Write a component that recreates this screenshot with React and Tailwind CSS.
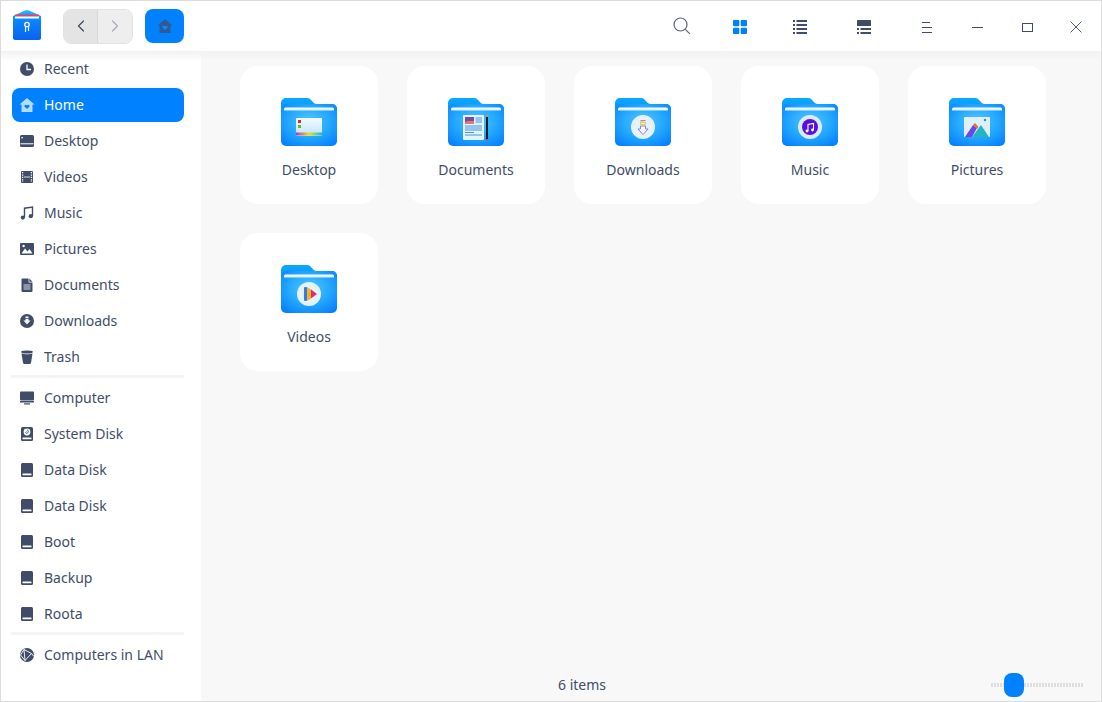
import { ChevronLeft, ChevronRight } from "lucide-react";

const ink = "#414d68";

// sidebar glyphs, all drawn on a 16x16 box
const ClockIcon = ({ color = ink }) => (
  <svg width="16" height="16" viewBox="0 0 16 16">
    <circle cx="8" cy="8" r="7" fill={color} />
    <path d="M8 3.5V8.5H12" fill="none" stroke="#fff" strokeWidth="1.3" />
  </svg>
);

const HomeIcon = ({ color = ink, heart = "#fff" }) => (
  <svg width="16" height="16" viewBox="0 0 16 16">
    <path d="M8 1L15.5 7.6H13.5V15H2.5V7.6H.5Z" fill={color} />
    <path d="M8 12L5.4 9.4C5 8.2 6.8 7.2 8 8.4 9.2 7.2 11 8.2 10.6 9.4Z" fill={heart} />
  </svg>
);

const DesktopIcon = () => (
  <svg width="16" height="16" viewBox="0 0 16 16">
    <rect x="1" y="2" width="14" height="12" rx="1.5" fill={ink} />
    <path d="M1.5 10.8H14.5" stroke="#fff" strokeWidth="1" />
    <rect x="2.4" y="4" width="1.4" height="1.4" fill="#fff" />
  </svg>
);

const VideoIcon = () => (
  <svg width="16" height="16" viewBox="0 0 16 16">
    <rect x="2" y="2" width="12" height="12" rx="1" fill={ink} />
    <path d="M3.6 3V13M12.4 3V13" stroke="#fff" strokeWidth="1.3" strokeDasharray="1.3 1.1" />
    <path d="M5 8H11" stroke="#fff" strokeWidth=".8" />
  </svg>
);

const MusicIcon = () => (
  <svg width="16" height="16" viewBox="0 0 16 16">
    <path d="M5.5 12.5V3.2L13.5 2V11" fill="none" stroke={ink} strokeWidth="1.4" />
    <circle cx="3.8" cy="12.6" r="2.1" fill={ink} />
    <circle cx="11.8" cy="11.2" r="2.1" fill={ink} />
  </svg>
);

const PictureIcon = () => (
  <svg width="16" height="16" viewBox="0 0 16 16">
    <rect x="1" y="2" width="14" height="12" rx="1" fill={ink} />
    <path d="M2.5 12.5L6 7.5 8.5 10.5 10.5 8 13.5 12.5Z" fill="#fff" />
    <circle cx="4.6" cy="5" r="1.2" fill="#fff" />
  </svg>
);

const DocIcon = () => (
  <svg width="16" height="16" viewBox="0 0 16 16">
    <path d="M2.5 2.5A1 1 0 0 1 3.5 1.5H9.6V5.4H13.5V14A1 1 0 0 1 12.5 15H3.5A1 1 0 0 1 2.5 14Z" fill={ink} />
    <path d="M10.3 1.5L13.5 4.7H10.3Z" fill={ink} />
    <path d="M4.5 8H11.5M4.5 10H11.5M4.5 12H11.5" stroke="#fff" strokeWidth=".8" />
  </svg>
);

const DownloadIcon = () => (
  <svg width="16" height="16" viewBox="0 0 16 16">
    <circle cx="8" cy="8" r="7" fill={ink} />
    <path d="M6.5 3.5H9.5V5H6.5ZM6.5 5.8H9.5V7.5H11.5L8 11.5 4.5 7.5H6.5Z" fill="#fff" />
  </svg>
);

const TrashIcon = () => (
  <svg width="16" height="16" viewBox="0 0 16 16">
    <ellipse cx="8" cy="3" rx="6" ry="1.6" fill={ink} />
    <path d="M2.5 4.5C5 5.5 11 5.5 13.5 4.5L12 14A1.5 1.5 0 0 1 10.5 15H5.5A1.5 1.5 0 0 1 4 14Z" fill={ink} />
  </svg>
);

const ComputerIcon = () => (
  <svg width="16" height="16" viewBox="0 0 16 16">
    <rect x="1" y="1.5" width="14" height="9" rx="1" fill={ink} />
    <rect x="1" y="11" width="14" height="1.5" fill={ink} />
    <rect x="5" y="13.3" width="6" height="1.2" fill={ink} />
  </svg>
);

const DiskIcon = ({ logo }) => (
  <svg width="16" height="16" viewBox="0 0 16 16">
    <rect x="2" y="1" width="12" height="14" rx="1.5" fill={ink} />
    <rect x="3.5" y="11.5" width="9" height="1.8" rx=".4" fill="#fff" />
    {logo && <circle cx="8" cy="6" r="3.4" fill="#fff" />}
    {logo && <path d="M8 3.5C10 5 9.5 7 7.5 7.5 6.5 7 6.5 6 7.5 5.5" fill="none" stroke={ink} strokeWidth=".9" />}
  </svg>
);

const SystemDiskIcon = () => <DiskIcon logo />;

const NetworkIcon = () => (
  <svg width="16" height="16" viewBox="0 0 16 16">
    <circle cx="8" cy="8" r="7" fill={ink} />
    <path d="M5 2.5L12.5 6.5 6 13.5ZM1.5 8L5 2.5M1.5 8L6 13.5M12.5 6.5L14.5 9" fill="none" stroke="#fff" strokeWidth=".9" />
  </svg>
);

// the coloured folder shell, the art in the middle is passed in as children
const Folder = ({ id, children }) => (
  <svg width="56" height="48" viewBox="0 0 56 48">
    <defs>
      <linearGradient id={`tab-${id}`} x1="0" y1="0" x2="0" y2="1">
        <stop offset="0" stopColor="#0aa8ff" />
        <stop offset="1" stopColor="#0a8cff" />
      </linearGradient>
      <radialGradient id={`body-${id}`} cx=".5" cy=".42" r=".7">
        <stop offset="0" stopColor="#55c8ff" />
        <stop offset=".55" stopColor="#22a6ff" />
        <stop offset="1" stopColor="#0580ff" />
      </radialGradient>
      <linearGradient id={`strip-${id}`} x1="0" y1="0" x2="0" y2="1">
        <stop offset="0" stopColor="#ffffff" />
        <stop offset="1" stopColor="#cfeeff" />
      </linearGradient>
    </defs>
    <path d="M0 5A5 5 0 0 1 5 0H26C29 0 29.5 1.5 31 3 32 4.5 33 6 36 6H51A5 5 0 0 1 56 11V20H0Z" fill={`url(#tab-${id})`} />
    <rect x="0" y="6" width="56" height="42" rx="5" fill={`url(#body-${id})`} />
    <path d="M3 12.5V11A1.5 1.5 0 0 1 4.5 9.5H51.5A1.5 1.5 0 0 1 53 11V12.5Z" fill={`url(#strip-${id})`} />
    {children}
  </svg>
);

const DesktopArt = () => (
  <g>
    <defs>
      <linearGradient id="paper" x1="0" y1="0" x2="0" y2="1">
        <stop offset="0" stopColor="#f4fbff" />
        <stop offset="1" stopColor="#bfe2fb" />
      </linearGradient>
      <linearGradient id="rainbow">
        <stop offset="0" stopColor="#a23ad8" />
        <stop offset=".5" stopColor="#e8e21a" />
        <stop offset="1" stopColor="#1fb5d6" />
      </linearGradient>
    </defs>
    <rect x="15" y="20" width="26" height="18" rx="1" fill="url(#paper)" />
    <rect x="17" y="22" width="3" height="3" fill="#e0263f" />
    <rect x="17" y="27" width="3" height="3" fill="#6eb52c" />
    <rect x="15" y="34.5" width="26" height="3" fill="url(#rainbow)" />
  </g>
);

const DocumentsArt = () => (
  <g>
    <rect x="15" y="17" width="21" height="25" rx="1" fill="#e6f3fd" />
    <rect x="17" y="19" width="9" height="7" fill="#7a4aa8" />
    <path d="M20 23H26V26H17V24Z" fill="#e07a60" />
    <path d="M27.5 20H34M27.5 22H34M27.5 24H34M17 28H34M17 30H34M17 32H34M17 34.5H26M17 37H34" stroke="#2a8ee0" strokeWidth=".9" />
    <rect x="38" y="17" width="2" height="25" fill="#1c1c22" />
    <rect x="38" y="17" width="2" height="2" fill="#b89a5a" />
    <rect x="38" y="41" width="2" height="1.5" fill="#d84060" />
  </g>
);

const DownloadsArt = () => (
  <g>
    <circle cx="28" cy="29" r="12" fill="#e4f2fd" />
    <rect x="25.5" y="22" width="5" height="1.2" fill="#ee7a50" />
    <rect x="25.5" y="24.3" width="5" height="2.2" fill="none" stroke="#d6cc30" strokeWidth=".8" />
    <path d="M25.5 28H30.5V31H33L28 36.5 23 31H25.5Z" fill="#fff" stroke="#8f7be8" strokeWidth="1" />
  </g>
);

const MusicArt = () => (
  <g>
    <circle cx="28" cy="29" r="12" fill="#d8ecfb" />
    <circle cx="28" cy="29" r="8" fill="#5a10d8" />
    <path d="M26 33V26.5L31.5 25.5V32" fill="none" stroke="#fff" strokeWidth="1.1" />
    <circle cx="25" cy="33" r="1.4" fill="#fff" />
    <circle cx="30.5" cy="32" r="1.4" fill="#fff" />
  </g>
);

const PicturesArt = () => (
  <g>
    <rect x="15" y="19" width="26" height="20" rx="1" fill="#dff0fc" />
    <circle cx="36" cy="22" r="1.2" fill="#2a8ee0" />
    <path d="M16 39L24 27 28 30 23 39Z" fill="#6a48e8" />
    <path d="M24 27L26 25 29.5 29 28 31Z" fill="#ee6a40" />
    <path d="M23 39L32 27 40 39Z" fill="#22b5c8" />
  </g>
);

const VideosArt = () => (
  <g>
    <circle cx="28" cy="29" r="12" fill="#e4f2fd" />
    <rect x="23" y="22" width="3" height="14" rx="1" fill="#2d7de8" />
    <path d="M26 22L30 24.5V33.5L26 36Z" fill="#f5b324" />
    <path d="M30 24.5L36 29 30 33.5Z" fill="#e8286e" />
  </g>
);

const places = [
  { icon: ClockIcon, label: "Recent" },
  { icon: HomeIcon, label: "Home", active: true },
  { icon: DesktopIcon, label: "Desktop" },
  { icon: VideoIcon, label: "Videos" },
  { icon: MusicIcon, label: "Music" },
  { icon: PictureIcon, label: "Pictures" },
  { icon: DocIcon, label: "Documents" },
  { icon: DownloadIcon, label: "Downloads" },
  { icon: TrashIcon, label: "Trash" },
];

const disks = [
  { icon: ComputerIcon, label: "Computer" },
  { icon: SystemDiskIcon, label: "System Disk" },
  { icon: DiskIcon, label: "Data Disk" },
  { icon: DiskIcon, label: "Data Disk" },
  { icon: DiskIcon, label: "Boot" },
  { icon: DiskIcon, label: "Backup" },
  { icon: DiskIcon, label: "Roota" },
];

const folders = [
  { name: "Desktop", art: <DesktopArt /> },
  { name: "Documents", art: <DocumentsArt /> },
  { name: "Downloads", art: <DownloadsArt /> },
  { name: "Music", art: <MusicArt /> },
  { name: "Pictures", art: <PicturesArt /> },
  { name: "Videos", art: <VideosArt /> },
];

function SideItem({ item }) {
  const Icon = item.icon;
  if (item.active) {
    return (
      <div className="my-px flex h-[34px] items-center gap-[9px] rounded-lg bg-[#0081ff] pl-[7px] text-white">
        <HomeIcon color="#b5dcff" heart="#0081ff" />
        <span>{item.label}</span>
      </div>
    );
  }
  return (
    <div className="flex h-9 items-center gap-[9px] pl-[7px]">
      <Icon />
      <span>{item.label}</span>
    </div>
  );
}

export default function App() {
  return (
    <div className="flex h-[702px] w-[1102px] flex-col overflow-hidden border border-[#dcdcdc] bg-white font-['Noto_Sans',sans-serif] text-sm text-[#414d68]">
      {/* Titlebar */}
      <div className="flex h-[50px] shrink-0 items-center bg-white">
        <svg className="mb-[2px] ml-[12px]" width="28" height="30" viewBox="0 0 28 30">
          <defs>
            <linearGradient id="logo" x1="0" y1="0" x2="0" y2="1">
              <stop offset="0" stopColor="#19c0ff" />
              <stop offset=".35" stopColor="#0a84ff" />
              <stop offset="1" stopColor="#0a62ee" />
            </linearGradient>
          </defs>
          <path d="M0 6L12 .5C13.5 0 14.5 0 16 .5L28 6V28A2 2 0 0 1 26 30H2A2 2 0 0 1 0 28Z" fill="url(#logo)" />
          <rect x="2" y="4.5" width="24" height="2" fill="#ee3d6e" />
          <rect x="2" y="6.5" width="24" height="2" fill="#ffffff" />
          <circle cx="14" cy="14.5" r="2.2" fill="none" stroke="#fff" strokeWidth="1.3" />
          <path d="M12.5 16.5V22M15.5 16.5V21" stroke="#dff2ff" strokeWidth="1.2" />
        </svg>
        <div className="ml-[22px] flex h-[35px] w-[70px] overflow-hidden rounded-lg border border-[#e2e2e2]">
          <div className="flex w-[34px] items-center justify-center border-r border-[#d8d8d8] bg-[#e4e4e4]">
            <ChevronLeft size={20} color={ink} strokeWidth={1.5} />
          </div>
          <div className="flex flex-1 items-center justify-center bg-[#eeeeee]">
            <ChevronRight size={20} color="#a9aebb" strokeWidth={1.5} />
          </div>
        </div>
        <div className="ml-[12px] flex h-[34px] w-[39px] items-center justify-center rounded-lg bg-[#0081ff]">
          <HomeIcon color="#2f5a94" heart="#0a8cff" />
        </div>

        <div className="ml-auto flex h-full items-center pt-[2px]">
          <div className="flex w-[58px] justify-center">
            <svg width="18" height="18" viewBox="0 0 18 18" className="mb-[3px]">
              <circle cx="7.5" cy="7.5" r="6.5" fill="none" stroke="#5c6579" strokeWidth="1.2" />
              <path d="M12.3 12.3L16.8 16.8" stroke="#5c6579" strokeWidth="1.2" />
            </svg>
          </div>
          <div className="flex w-[58px] justify-center">
            <svg width="14" height="14" viewBox="0 0 14 14">
              <rect width="6.3" height="6.3" rx="1" fill="#0081ff" />
              <rect x="7.7" width="6.3" height="6.3" rx="1" fill="#0081ff" />
              <rect y="7.7" width="6.3" height="6.3" rx="1" fill="#0081ff" />
              <rect x="7.7" y="7.7" width="6.3" height="6.3" rx="1" fill="#0081ff" />
            </svg>
          </div>
          <div className="flex w-[62px] justify-center">
            <svg width="14" height="14" viewBox="0 0 14 14">
              <path d="M0 1H2M3.5 1H14M0 5H2M3.5 5H14M0 9H2M3.5 9H14M0 13H2M3.5 13H14" stroke={ink} strokeWidth="2" />
            </svg>
          </div>
          <div className="flex w-[66px] justify-center">
            <svg width="14" height="14" viewBox="0 0 14 14" className="mb-[1px]">
              <rect width="14" height="6" rx=".5" fill={ink} />
              <path d="M0 9H2M3.5 9H14M0 13H2M3.5 13H14" stroke={ink} strokeWidth="2" />
            </svg>
          </div>
          <div className="ml-[5px] flex w-[50px] justify-center">
            <svg width="10" height="11" viewBox="0 0 10 11">
              <path d="M0 .5H8M0 5.5H10M0 10.5H10" stroke={ink} strokeWidth="1" />
            </svg>
          </div>
          <div className="flex w-[50px] justify-center">
            <div className="h-px w-[11px] bg-[#414d68]" />
          </div>
          <div className="flex w-[50px] justify-center">
            <div className="h-[9px] w-[11px] border border-[#414d68]" />
          </div>
          <div className="flex w-[49px] justify-center pr-[2px]">
            <svg width="12" height="12" viewBox="0 0 12 12">
              <path d="M.5 .5L11.5 11.5M11.5 .5L.5 11.5" stroke={ink} strokeWidth=".9" />
            </svg>
          </div>
        </div>
      </div>

      <div className="flex min-h-0 flex-1">
        {/* Sidebar */}
        <aside className="flex w-[200px] shrink-0 flex-col bg-gradient-to-b from-[#f1f1f1] to-white to-[10px] pl-[10px] pr-[17px]">
          <div className="pl-px">
            {places.map((item) => (
              <SideItem key={item.label} item={item} />
            ))}
          </div>
          <div className="mb-[2px] h-[3px] bg-[#f4f4f4]" />
          <div className="pl-px">
            {disks.map((item, i) => (
              <SideItem key={i} item={item} />
            ))}
          </div>
          <div className="mb-[2px] h-[3px] bg-[#f4f4f4]" />
          <div className="pl-px">
            <SideItem item={{ icon: NetworkIcon, label: "Computers in LAN" }} />
          </div>
        </aside>

        {/* File grid */}
        <main className="flex min-w-0 flex-1 flex-col bg-gradient-to-b from-[#f1f1f1] to-[#f8f8f8] to-[10px]">
          <div className="flex flex-1 flex-wrap content-start gap-[29px] pl-[39px] pr-[20px] pt-[15px]">
            {folders.map((f) => (
              <div key={f.name} className="flex h-[138px] w-[138px] flex-col items-center rounded-[18px] bg-white pt-[32px]">
                <Folder id={f.name}>{f.art}</Folder>
                <span className="mt-[14px] leading-[20px]">{f.name}</span>
              </div>
            ))}
          </div>
          {/* Status bar */}
          <div className="flex h-[34px] shrink-0 items-center pl-[357px] pr-[18px] pt-[2px]">
            <span>6 items</span>
            <div className="relative ml-auto flex h-[24px] w-[92px] items-center">
              <div className="h-[4px] w-full bg-[repeating-linear-gradient(90deg,#dedede_0,#dedede_2px,transparent_2px,transparent_3px)]" />
              <div className="absolute left-[13px] top-0 h-[24px] w-[20px] rounded-[8px] bg-[#0081ff]" />
            </div>
          </div>
        </main>
      </div>
    </div>
  );
}
